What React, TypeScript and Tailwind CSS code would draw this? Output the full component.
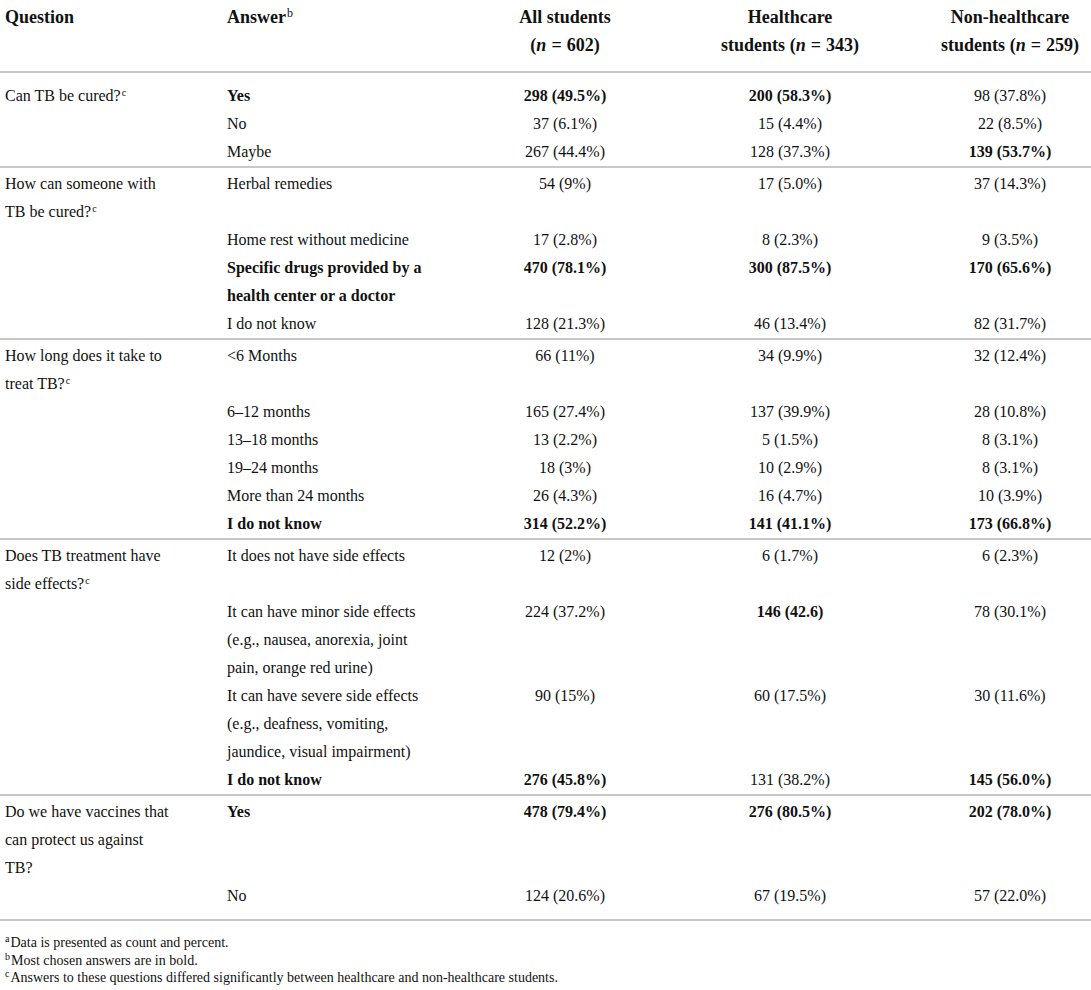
import React from "react";

type Row = {
  a: React.ReactNode;
  ab?: boolean;
  v: [string, string, string];
  vb?: [boolean, boolean, boolean];
};
type Group = { q: React.ReactNode; rows: Row[] };

const Sup = ({ c }: { c: string }) => (
  <sup className="text-[10px] ml-[1px]">{c}</sup>
);

const groups: Group[] = [
  {
    q: (
      <>
        Can TB be cured?
        <Sup c="c" />
      </>
    ),
    rows: [
      { a: "Yes", ab: true, v: ["298 (49.5%)", "200 (58.3%)", "98 (37.8%)"], vb: [true, true, false] },
      { a: "No", v: ["37 (6.1%)", "15 (4.4%)", "22 (8.5%)"] },
      { a: "Maybe", v: ["267 (44.4%)", "128 (37.3%)", "139 (53.7%)"], vb: [false, false, true] },
    ],
  },
  {
    q: (
      <>
        How can someone with
        <br />
        TB be cured?
        <Sup c="c" />
      </>
    ),
    rows: [
      { a: "Herbal remedies", v: ["54 (9%)", "17 (5.0%)", "37 (14.3%)"] },
      { a: "Home rest without medicine", v: ["17 (2.8%)", "8 (2.3%)", "9 (3.5%)"] },
      {
        a: (
          <>
            Specific drugs provided by a
            <br />
            health center or a doctor
          </>
        ),
        ab: true,
        v: ["470 (78.1%)", "300 (87.5%)", "170 (65.6%)"],
        vb: [true, true, true],
      },
      { a: "I do not know", v: ["128 (21.3%)", "46 (13.4%)", "82 (31.7%)"] },
    ],
  },
  {
    q: (
      <>
        How long does it take to
        <br />
        treat TB?
        <Sup c="c" />
      </>
    ),
    rows: [
      { a: "<6 Months", v: ["66 (11%)", "34 (9.9%)", "32 (12.4%)"] },
      { a: "6–12 months", v: ["165 (27.4%)", "137 (39.9%)", "28 (10.8%)"] },
      { a: "13–18 months", v: ["13 (2.2%)", "5 (1.5%)", "8 (3.1%)"] },
      { a: "19–24 months", v: ["18 (3%)", "10 (2.9%)", "8 (3.1%)"] },
      { a: "More than 24 months", v: ["26 (4.3%)", "16 (4.7%)", "10 (3.9%)"] },
      { a: "I do not know", ab: true, v: ["314 (52.2%)", "141 (41.1%)", "173 (66.8%)"], vb: [true, true, true] },
    ],
  },
  {
    q: (
      <>
        Does TB treatment have
        <br />
        side effects?
        <Sup c="c" />
      </>
    ),
    rows: [
      { a: "It does not have side effects", v: ["12 (2%)", "6 (1.7%)", "6 (2.3%)"] },
      {
        a: (
          <>
            It can have minor side effects
            <br />
            (e.g., nausea, anorexia, joint
            <br />
            pain, orange red urine)
          </>
        ),
        v: ["224 (37.2%)", "146 (42.6)", "78 (30.1%)"],
        vb: [false, true, false],
      },
      {
        a: (
          <>
            It can have severe side effects
            <br />
            (e.g., deafness, vomiting,
            <br />
            jaundice, visual impairment)
          </>
        ),
        v: ["90 (15%)", "60 (17.5%)", "30 (11.6%)"],
      },
      { a: "I do not know", ab: true, v: ["276 (45.8%)", "131 (38.2%)", "145 (56.0%)"], vb: [true, false, true] },
    ],
  },
  {
    q: (
      <>
        Do we have vaccines that
        <br />
        can protect us against
        <br />
        TB?
      </>
    ),
    rows: [
      { a: "Yes", ab: true, v: ["478 (79.4%)", "276 (80.5%)", "202 (78.0%)"], vb: [true, true, true] },
      { a: "No", v: ["124 (20.6%)", "67 (19.5%)", "57 (22.0%)"] },
    ],
  },
];

const gridCols = "grid grid-cols-[222px_226px_224px_226px_1fr] pl-[5px]";

const N = ({ num }: { num: string }) => (
  <>
    (<i>n</i>
    <span className="mx-[5px]">=</span>
    {num})
  </>
);

export default function App() {
  return (
    <div className="w-[1091px] min-h-[990px] bg-white text-[#111] font-['Liberation_Serif',serif]">
      {/* Header */}
      <div className="border-b-2 border-[#c8c8c8] pt-[3px] pb-[12px]">
        <div className={`${gridCols} text-[18px] font-bold leading-[28px]`}>
          <div>Question</div>
          <div>
            Answer
            <sup className="text-[12px] font-normal ml-[1px]">b</sup>
          </div>
          <div className="text-center whitespace-nowrap">
            All students
            <br />
            <N num="602" />
          </div>
          <div className="text-center whitespace-nowrap">
            Healthcare
            <br />
            students <N num="343" />
          </div>
          <div className="text-center pl-[26px] whitespace-nowrap">
            Non-healthcare
            <br />
            students <N num="259" />
          </div>
        </div>
      </div>

      {/* Body */}
      {groups.map((g, gi) => (
        <div
          key={gi}
          className={`border-b-2 border-[#c8c8c8] ${gi === 0 ? "pt-[9px]" : "pt-[2px]"} ${
            gi === groups.length - 1 ? "pb-[9px]" : ""
          }`}
        >
          <div className={`${gridCols} text-[16px] leading-[28px]`}>
            {g.rows.map((r, ri) => (
              <React.Fragment key={ri}>
                <div className="whitespace-nowrap">{ri === 0 ? g.q : null}</div>
                <div className={`whitespace-nowrap ${r.ab ? "font-bold" : ""}`}>{r.a}</div>
                {r.v.map((val, vi) => (
                  <div
                    key={vi}
                    className={`text-center whitespace-nowrap ${vi === 2 ? "pl-[26px]" : ""} ${
                      r.vb && r.vb[vi] ? "font-bold" : ""
                    }`}
                  >
                    {val}
                  </div>
                ))}
              </React.Fragment>
            ))}
          </div>
        </div>
      ))}

      {/* Footnotes */}
      <div className="pl-[5px] pt-[13px] text-[14px] leading-[17.5px]">
        <div>
          <sup className="text-[10px] mr-[1px]">a</sup>Data is presented as count and percent.
        </div>
        <div>
          <sup className="text-[10px] mr-[1px]">b</sup>Most chosen answers are in bold.
        </div>
        <div>
          <sup className="text-[10px] mr-[1px]">c</sup>Answers to these questions differed significantly between
          healthcare and non-healthcare students.
        </div>
      </div>
    </div>
  );
}
